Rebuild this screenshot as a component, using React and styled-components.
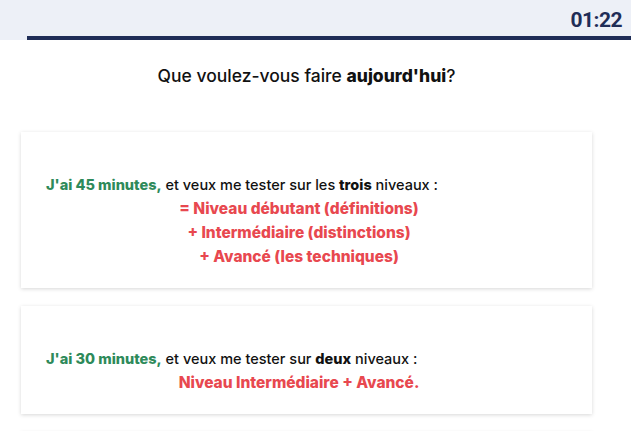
import React from "react";
import styled, { createGlobalStyle } from "styled-components";

const GlobalStyle = createGlobalStyle`
  html, body { margin: 0; padding: 0; background: #ffffff; }
  body { font-family: Inter, "Noto Sans", sans-serif; color: #111111; }
`;

const Page = styled.div`
  width: 613px;
`;

const Header = styled.header`
  width: 631px;
  height: 40px;
  background: #edf0f7;
  display: flex;
  flex-direction: column;
  justify-content: flex-end;
`;

const Timer = styled.div`
  text-align: right;
  padding-right: 9px;
  font-family: Roboto, "Liberation Sans", sans-serif;
  font-weight: 700;
  font-size: 21px;
  letter-spacing: -0.5px;
  line-height: 24px;
  color: #1f2d57;
  margin-bottom: 4px;
`;

const Bar = styled.div`
  margin-left: 27px;
  height: 4px;
  background: #1f2d57;
`;

const Title = styled.h1`
  margin: 24px 0 44px;
  text-align: center;
  font-size: 17.5px;
  line-height: 24px;
  font-weight: 500;
  color: #111111;
  b { font-weight: 800; }
`;

const Card = styled.div`
  margin: 0 21px 18px;
  padding: 41px 40px 19px 25px;
  background: #ffffff;
  box-shadow: 0 1px 4px rgba(0, 0, 0, 0.16);
  font-size: 14.5px;
  line-height: 24px;
`;

const Lead = styled.div`
  font-weight: 500;
  b { font-weight: 800; }
`;

const Green = styled.span`
  color: #2e8a5a;
  font-weight: 800;
`;

const Red = styled.div`
  text-align: center;
  color: #e8484f;
  font-weight: 800;
  font-size: 15.5px;
`;

export default function App() {
  return (
    <>
      <GlobalStyle />
      <Header>
        <Timer>01:22</Timer>
        <Bar />
      </Header>
      <Page>
        <Title>
          Que voulez-vous faire <b>aujourd'hui</b>?
        </Title>
        <Card>
          <Lead>
            <Green>J'ai 45 minutes,</Green> et veux me tester sur les <b>trois</b> niveaux :
          </Lead>
          <Red>= Niveau débutant (définitions)</Red>
          <Red>+ Intermédiaire (distinctions)</Red>
          <Red>+ Avancé (les techniques)</Red>
        </Card>
        <Card>
          <Lead>
            <Green>J'ai 30 minutes,</Green> et veux me tester sur <b>deux</b> niveaux :
          </Lead>
          <Red>Niveau Intermédiaire + Avancé.</Red>
        </Card>
        <Card>
          <Lead>
            <Green>J'ai 15 minutes,</Green> et veux me tester sur <b>un</b> niveau :
          </Lead>
          <Red>Niveau Avancé.</Red>
        </Card>
      </Page>
    </>
  );
}
